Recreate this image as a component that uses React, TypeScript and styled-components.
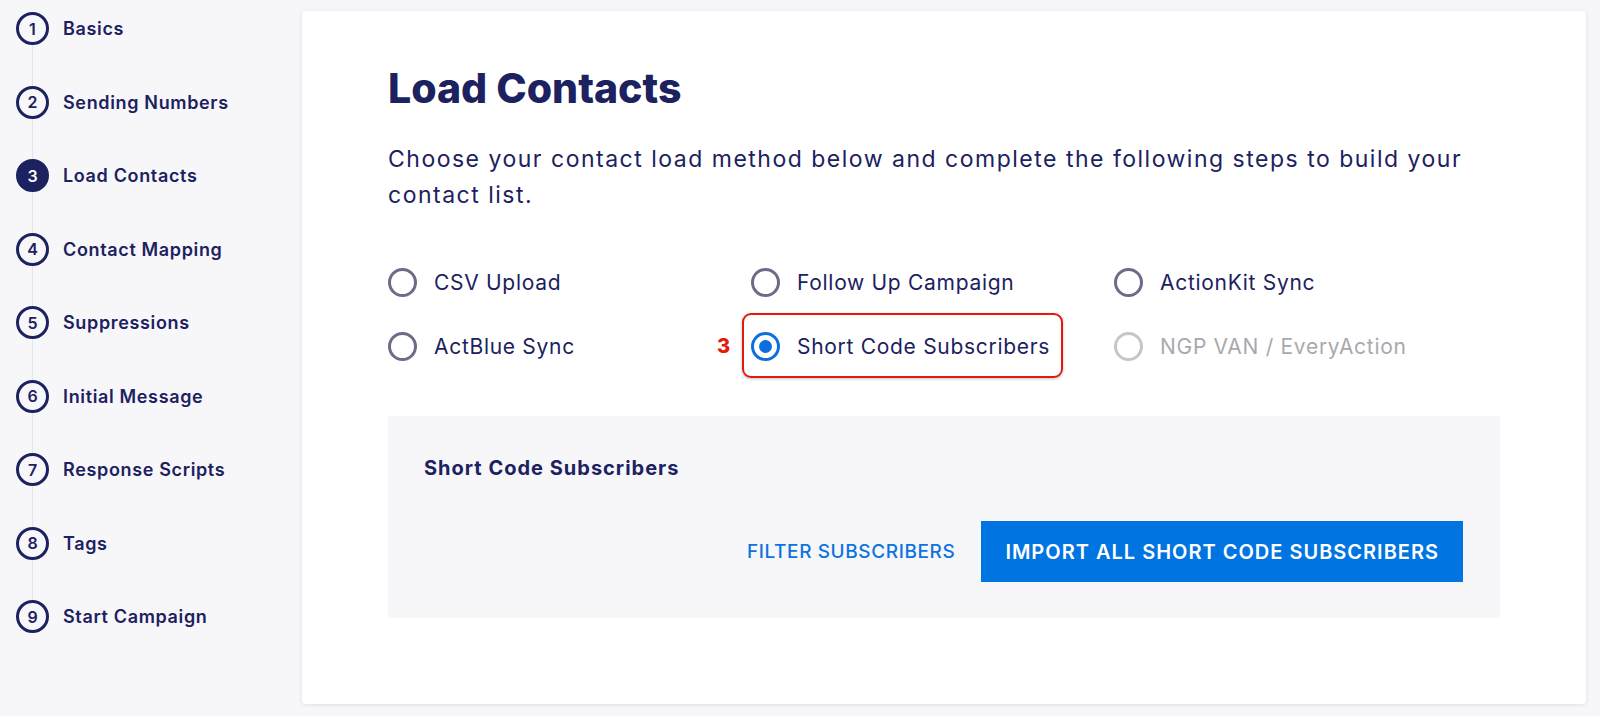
import React from 'react'
import styled, { createGlobalStyle } from 'styled-components'

const GlobalStyle = createGlobalStyle`
  html, body {
    margin: 0;
    padding: 0;
    background: #f7f7fa;
    font-family: Inter, 'Open Sans', Arial, sans-serif;
    color: #1c2160;
  }
  * { box-sizing: border-box; }
`

const Page = styled.div`
  display: flex;
  width: 1600px;
  height: 716px;
  overflow: hidden;
`

const Sidebar = styled.nav`
  width: 302px;
  flex-shrink: 0;
  padding: 12px 0 0 16px;
  display: flex;
  flex-direction: column;
`

const Step = styled.div`
  display: grid;
  grid-template-columns: 33px 1fr;
  column-gap: 14px;
  height: 73.5px;
`

const Track = styled.div`
  display: flex;
  flex-direction: column;
  align-items: center;
`

const StepCircle = styled.div<{ $active?: boolean }>`
  width: 33px;
  height: 33px;
  border-radius: 50%;
  border: 3px solid #1c2160;
  background: ${p => (p.$active ? '#1c2160' : 'transparent')};
  color: ${p => (p.$active ? '#ffffff' : '#1c2160')};
  display: flex;
  align-items: center;
  justify-content: center;
  font-size: 16px;
  font-weight: 600;
  flex-shrink: 0;
`

const Connector = styled.div`
  flex: 1;
  width: 1px;
  background: #e4e4ec;
`

const StepLabel = styled.div`
  height: 33px;
  line-height: 33px;
  font-size: 18px;
  font-weight: 600;
  letter-spacing: 0.65px;
  color: #1c2160;
  white-space: nowrap;
`

const Card = styled.main`
  flex: 1;
  margin: 11px 14px 12px 0;
  background: #ffffff;
  border-radius: 4px;
  box-shadow: 0 1px 4px rgba(40, 40, 90, 0.12);
  padding: 52px 86px 0 86px;
`

const Title = styled.h1`
  margin: 0;
  font-size: 41px;
  line-height: 50px;
  font-weight: 800;
  color: #1c2160;
`

const Intro = styled.p`
  margin: 28px 0 0;
  font-size: 23px;
  line-height: 36px;
  letter-spacing: 1.5px;
  font-weight: 400;
  color: #1c2160;
`

const Options = styled.div`
  display: grid;
  grid-template-columns: repeat(3, 363px);
  row-gap: 32px;
  margin-top: 53px;
`

const Option = styled.label<{ $disabled?: boolean }>`
  position: relative;
  display: flex;
  align-items: center;
  gap: 17px;
  height: 32px;
  font-size: 21px;
  letter-spacing: 0.7px;
  color: ${p => (p.$disabled ? '#a9a9ad' : '#1c2160')};
`

const RadioMark = styled.span<{ $checked?: boolean; $disabled?: boolean }>`
  width: 29px;
  height: 29px;
  border-radius: 50%;
  border: 3px solid
    ${p => (p.$checked ? '#0b6fde' : p.$disabled ? '#c6c6c8' : '#6e6a88')};
  display: flex;
  align-items: center;
  justify-content: center;
  flex-shrink: 0;

  &::after {
    content: '';
    width: 13px;
    height: 13px;
    border-radius: 50%;
    background: ${p => (p.$checked ? '#0b6fde' : 'transparent')};
  }
`

const Highlight = styled.span`
  position: absolute;
  left: -9px;
  top: -17px;
  width: 321px;
  height: 65px;
  border: 2.5px solid #e3190d;
  border-radius: 9px;
  box-shadow: 0 1px 3px rgba(0, 0, 0, 0.25);
  pointer-events: none;
`

const Marker = styled.span`
  position: absolute;
  left: -34px;
  top: 50%;
  transform: translateY(-50%);
  font-size: 20px;
  font-weight: 800;
  letter-spacing: 0;
  color: #e3190d;
`

const Panel = styled.section`
  margin-top: 54px;
  background: #f7f7fa;
  padding: 40px 37px 36px 36px;
  display: flex;
  flex-direction: column;
  gap: 41px;
`

const PanelTitle = styled.h2`
  margin: 0;
  font-size: 20px;
  line-height: 24px;
  letter-spacing: 1px;
  font-weight: 700;
  color: #1c2160;
`

const Actions = styled.div`
  display: flex;
  justify-content: flex-end;
  align-items: center;
  gap: 18px;
`

const Button = styled.button<{ $variant: 'text' | 'contained' }>`
  font-family: inherit;
  border: none;
  cursor: pointer;
  text-transform: uppercase;
  height: 61px;
  font-size: ${p => (p.$variant === 'contained' ? '20px' : '19px')};
  letter-spacing: ${p => (p.$variant === 'contained' ? '1px' : '0.6px')};
  padding: ${p => (p.$variant === 'contained' ? '0 24px' : '0 8px')};
  font-weight: ${p => (p.$variant === 'contained' ? 600 : 500)};
  background: ${p => (p.$variant === 'contained' ? '#0074e0' : 'transparent')};
  color: ${p => (p.$variant === 'contained' ? '#ffffff' : '#0b74de')};
`

const steps = [
  'Basics',
  'Sending Numbers',
  'Load Contacts',
  'Contact Mapping',
  'Suppressions',
  'Initial Message',
  'Response Scripts',
  'Tags',
  'Start Campaign',
]

const methods = [
  { label: 'CSV Upload' },
  { label: 'Follow Up Campaign' },
  { label: 'ActionKit Sync' },
  { label: 'ActBlue Sync' },
  { label: 'Short Code Subscribers', checked: true },
  { label: 'NGP VAN / EveryAction', disabled: true },
]

export default function App() {
  return (
    <>
      <GlobalStyle />
      <Page>
        <Sidebar>
          {steps.map((step, i) => (
            <Step key={step}>
              <Track>
                <StepCircle $active={i === 2}>{i + 1}</StepCircle>
                {i < steps.length - 1 && <Connector />}
              </Track>
              <StepLabel>{step}</StepLabel>
            </Step>
          ))}
        </Sidebar>

        <Card>
          <Title>Load Contacts</Title>
          <Intro>
            Choose your contact load method below and complete the following steps to build your
            contact list.
          </Intro>

          <Options>
            {methods.map(m => (
              <Option key={m.label} $disabled={m.disabled}>
                <RadioMark $checked={m.checked} $disabled={m.disabled} />
                {m.label}
                {m.checked && (
                  <>
                    <Marker>3</Marker>
                    <Highlight />
                  </>
                )}
              </Option>
            ))}
          </Options>

          <Panel>
            <PanelTitle>Short Code Subscribers</PanelTitle>
            <Actions>
              <Button $variant="text">Filter Subscribers</Button>
              <Button $variant="contained">Import All Short Code Subscribers</Button>
            </Actions>
          </Panel>
        </Card>
      </Page>
    </>
  )
}
